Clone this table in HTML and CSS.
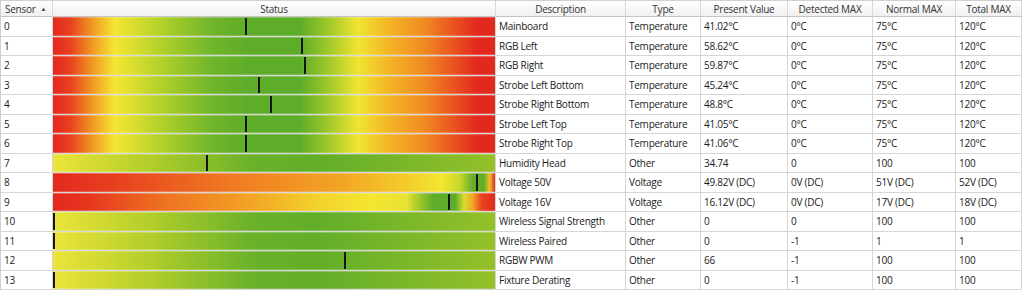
FILE: index.html
```html
<!DOCTYPE html>
<html>
<head>
<meta charset="utf-8">
<link rel="stylesheet" href="styles.css">
</head>
<body>
<div class="grid">
  <div class="row head">
    <div class="hc left">Sensor <span class="sort">▲</span></div>
    <div class="hc">Status</div>
    <div class="hc">Description</div>
    <div class="hc">Type</div>
    <div class="hc">Present Value</div>
    <div class="hc">Detected MAX</div>
    <div class="hc">Normal MAX</div>
    <div class="hc">Total MAX</div>
  </div>

  <div class="row"><div class="c">0</div><div class="s"><div class="bar temp"><i class="mk" style="left:43.4%"></i></div></div><div class="c">Mainboard</div><div class="c">Temperature</div><div class="c">41.02°C</div><div class="c">0°C</div><div class="c">75°C</div><div class="c">120°C</div></div>
  <div class="row"><div class="c">1</div><div class="s"><div class="bar temp"><i class="mk" style="left:56%"></i></div></div><div class="c">RGB Left</div><div class="c">Temperature</div><div class="c">58.62°C</div><div class="c">0°C</div><div class="c">75°C</div><div class="c">120°C</div></div>
  <div class="row"><div class="c">2</div><div class="s"><div class="bar temp"><i class="mk" style="left:56.9%"></i></div></div><div class="c">RGB Right</div><div class="c">Temperature</div><div class="c">59.87°C</div><div class="c">0°C</div><div class="c">75°C</div><div class="c">120°C</div></div>
  <div class="row"><div class="c">3</div><div class="s"><div class="bar temp"><i class="mk" style="left:46.45%"></i></div></div><div class="c">Strobe Left Bottom</div><div class="c">Temperature</div><div class="c">45.24°C</div><div class="c">0°C</div><div class="c">75°C</div><div class="c">120°C</div></div>
  <div class="row"><div class="c">4</div><div class="s"><div class="bar temp"><i class="mk" style="left:49%"></i></div></div><div class="c">Strobe Right Bottom</div><div class="c">Temperature</div><div class="c">48.8°C</div><div class="c">0°C</div><div class="c">75°C</div><div class="c">120°C</div></div>
  <div class="row"><div class="c">5</div><div class="s"><div class="bar temp"><i class="mk" style="left:43.4%"></i></div></div><div class="c">Strobe Left Top</div><div class="c">Temperature</div><div class="c">41.05°C</div><div class="c">0°C</div><div class="c">75°C</div><div class="c">120°C</div></div>
  <div class="row"><div class="c">6</div><div class="s"><div class="bar temp"><i class="mk" style="left:43.4%"></i></div></div><div class="c">Strobe Right Top</div><div class="c">Temperature</div><div class="c">41.06°C</div><div class="c">0°C</div><div class="c">75°C</div><div class="c">120°C</div></div>
  <div class="row"><div class="c">7</div><div class="s"><div class="bar level"><i class="mk" style="left:34.6%"></i></div></div><div class="c">Humidity Head</div><div class="c">Other</div><div class="c">34.74</div><div class="c">0</div><div class="c">100</div><div class="c">100</div></div>
  <div class="row"><div class="c">8</div><div class="s"><div class="bar v50"><i class="mk" style="left:95.6%"></i></div></div><div class="c">Voltage 50V</div><div class="c">Voltage</div><div class="c">49.82V (DC)</div><div class="c">0V (DC)</div><div class="c">51V (DC)</div><div class="c">52V (DC)</div></div>
  <div class="row"><div class="c">9</div><div class="s"><div class="bar v16"><i class="mk" style="left:89.4%"></i></div></div><div class="c">Voltage 16V</div><div class="c">Voltage</div><div class="c">16.12V (DC)</div><div class="c">0V (DC)</div><div class="c">17V (DC)</div><div class="c">18V (DC)</div></div>
  <div class="row"><div class="c">10</div><div class="s"><div class="bar level"><i class="mk" style="left:0%"></i></div></div><div class="c">Wireless Signal Strength</div><div class="c">Other</div><div class="c">0</div><div class="c">0</div><div class="c">100</div><div class="c">100</div></div>
  <div class="row"><div class="c">11</div><div class="s"><div class="bar level"><i class="mk" style="left:0%"></i></div></div><div class="c">Wireless Paired</div><div class="c">Other</div><div class="c">0</div><div class="c">-1</div><div class="c">1</div><div class="c">1</div></div>
  <div class="row"><div class="c">12</div><div class="s"><div class="bar level"><i class="mk" style="left:65.8%"></i></div></div><div class="c">RGBW PWM</div><div class="c">Other</div><div class="c">66</div><div class="c">-1</div><div class="c">100</div><div class="c">100</div></div>
  <div class="row"><div class="c">13</div><div class="s"><div class="bar level"><i class="mk" style="left:0%"></i></div></div><div class="c">Fixture Derating</div><div class="c">Other</div><div class="c">0</div><div class="c">-1</div><div class="c">100</div><div class="c">100</div></div>
</div>
</body>
</html>
```

FILE: styles.css
```css
html, body {
  margin: 0;
  padding: 0;
  background: #ffffff;
}

.grid {
  display: grid;
  grid-template-columns: 52px 443px 130px 75px 87px 85px 83px 66px;
  grid-template-rows: 16px repeat(14, 19.5px);
  width: 1022px;
  border-top: 1px solid #d0d0d0;
  border-left: 1px solid #d0d0d0;
  box-sizing: border-box;
  font-family: "Open Sans", "Liberation Sans", sans-serif;
  font-size: 10px;
  letter-spacing: -0.25px;
  color: #1a1a1a;
}

.row {
  display: contents;
}

.hc {
  display: flex;
  align-items: center;
  justify-content: center;
  background: linear-gradient(#ffffff, #f0f0f0);
  border-right: 1px solid #d8d8d8;
  border-bottom: 1px solid #c4c4c4;
  color: #333333;
  white-space: nowrap;
  overflow: hidden;
}

.hc.left {
  justify-content: flex-start;
  padding-left: 4px;
  gap: 5px;
}

.sort {
  font-size: 6px;
  color: #444444;
}

.c {
  display: flex;
  align-items: center;
  padding-left: 3px;
  border-right: 1px solid #d6d6d6;
  border-bottom: 1px solid #d6d6d6;
  white-space: nowrap;
  overflow: hidden;
}

.s {
  border-right: 1px solid #d6d6d6;
  border-bottom: 1px solid #d6d6d6;
  display: flex;
}

.bar {
  position: relative;
  flex: 1;
  box-shadow: inset 0 1px 0 rgba(255,255,255,0.25), inset 0 -1px 0 rgba(255,255,255,0.2);
}

.mk {
  position: absolute;
  top: 1px;
  bottom: 1px;
  width: 2px;
  background: #141414;
}

.temp {
  background: linear-gradient(to right,
    #e3281e 0%, #e8421f 4%, #f19a23 9%, #f4e631 14%, #b4d22a 24%,
    #70b52a 36%, #5ead29 44%, #5ead29 56%, #9cc72a 62%, #f0e431 69%,
    #f3b526 76%, #f08a22 84%, #e8481f 92%, #e3281e 96%, #e3281e 100%);
}

.level {
  background: linear-gradient(to right,
    #ece43a 0%, #b8d02a 20%, #6ab12a 45%, #62ae29 60%, #94c02a 100%);
}

.v50 {
  background: linear-gradient(to right,
    #e3281e 0%, #e8421f 15%, #ef7a22 40%, #f2a524 65%, #f3cc2c 80%,
    #f4e631 88%, #c8d82a 92%, #62ae29 95%, #62ae29 97.5%, #f2c02a 98.8%, #e3281e 100%);
}

.v16 {
  background: linear-gradient(to right,
    #e3281e 0%, #e6361f 8%, #ee7221 25%, #f2a524 45%, #f3d22d 60%,
    #f4e631 72%, #e8e232 80%, #9cc72a 83%, #5ead29 86%, #5ead29 91%,
    #d8dc2e 93%, #f3a524 95%, #e8421f 97%, #e3281e 100%);
}
```
